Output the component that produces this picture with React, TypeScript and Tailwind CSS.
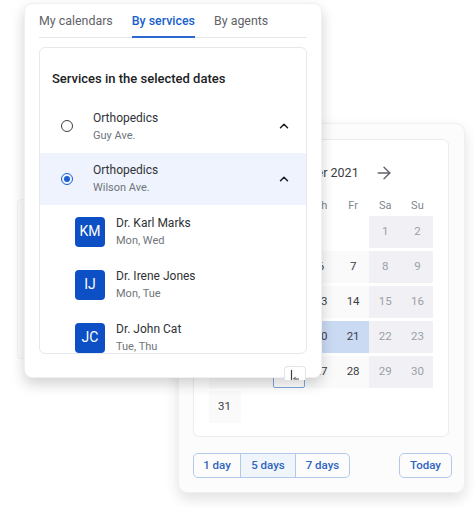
import { ArrowLeft, ArrowRight, ChevronUp } from "lucide-react";

const font = { fontFamily: "Roboto, 'Liberation Sans', sans-serif" };

const agents = [
  { initials: "KM", name: "Dr. Karl Marks", days: "Mon, Wed" },
  { initials: "IJ", name: "Dr. Irene Jones", days: "Mon, Tue" },
  { initials: "JC", name: "Dr. John Cat", days: "Tue, Thu" },
];

const weekDays = ["Mo", "Tu", "We", "Th", "Fr", "Sa", "Su"];

// month starts on a Saturday, 31 days
const cells: (number | null)[] = [
  null, null, null, null, null,
  ...Array.from({ length: 31 }, (_, i) => i + 1),
];

export default function App() {
  return (
    <div
      className="relative w-[474px] h-[507px] bg-white overflow-hidden"
      style={font}
    >
      {/* faint window far behind */}
      <div className="absolute left-[17px] top-[199px] w-[120px] h-[160px] bg-[#fcfcfc] border border-[#f4f4f4] rounded-[4px]" />

      <CalendarCard />
      <ServicesPopup />

      {/* little handle sitting on the popup's lower edge */}
      <div className="absolute left-[284px] top-[366px] w-[22px] h-[14px] bg-white border border-b-0 border-[#e2e4e8] rounded-t-[4px]">
        <svg width="22" height="14" viewBox="0 0 22 14" className="absolute -left-px -top-px">
          <path d="M7.5 4v10" stroke="#3c4043" strokeWidth="1.2" />
          <path d="M15 13h-5.5l2.2-2.2" stroke="#3c4043" strokeWidth="1" fill="none" />
        </svg>
      </div>
    </div>
  );
}

function ServicesPopup() {
  return (
    <div className="absolute left-[24px] top-[3px] w-[298px] h-[375px] bg-white rounded-[8px] border border-[#f0f0f2] shadow-[0_6px_14px_rgba(0,0,0,0.18)] px-[14px] flex flex-col">
      <div className="flex gap-[19px] border-b border-[#e4e6eb] h-[34px] text-[12.4px]">
        <div className="pt-[8px] text-[#5f6368]">My calendars</div>
        <div className="pt-[8px] text-[#1b5fcc] font-medium border-b-2 border-[#2d68d2] -mb-px">
          By services
        </div>
        <div className="pt-[8px] text-[#5f6368]">By agents</div>
      </div>

      <div className="mt-[9px] h-[307px] border border-[#e6e8ec] rounded-[6px] overflow-hidden">
        <div className="pl-[12px] pt-[21px] h-[52px] text-[13px] font-medium text-[#202124]">
          Services in the selected dates
        </div>

        <ServiceRow title="Orthopedics" place="Guy Ave." />
        <ServiceRow title="Orthopedics" place="Wilson Ave." selected />

        {agents.map((a) => (
          <div key={a.initials} className="flex items-center h-[53px] pl-[35px] gap-[11px]">
            <div className="w-[30px] h-[30px] rounded-[4px] bg-[#0d4fc4] text-white text-[14px] flex items-center justify-center">
              {a.initials}
            </div>
            <div className="flex flex-col">
              <span className="text-[12px] text-[#303236] leading-[16px]">{a.name}</span>
              <span className="text-[11px] text-[#70757a] leading-[15px] mt-[2px]">{a.days}</span>
            </div>
          </div>
        ))}
      </div>
    </div>
  );
}

function ServiceRow({
  title,
  place,
  selected,
}: {
  title: string;
  place: string;
  selected?: boolean;
}) {
  return (
    <div
      className={
        "flex items-center h-[52.5px] pl-[21px] pr-[15px] " +
        (selected ? "bg-[#eef3fd]" : "bg-white")
      }
    >
      {selected ? (
        <div className="w-[12px] h-[12px] rounded-full border-[1.5px] border-[#1a5fd0] flex items-center justify-center">
          <div className="w-[6px] h-[6px] rounded-full bg-[#1a5fd0]" />
        </div>
      ) : (
        <div className="w-[12px] h-[12px] rounded-full border-[1.5px] border-[#3c4043]" />
      )}
      <div className="flex flex-col ml-[20px] flex-1">
        <span className="text-[12px] text-[#303236] leading-[16px]">{title}</span>
        <span className="text-[11px] text-[#70757a] leading-[15px] mt-[2px]">{place}</span>
      </div>
      <ChevronUp size={14} strokeWidth={2.6} className="text-[#202124]" />
    </div>
  );
}

function CalendarCard() {
  return (
    <div className="absolute left-[178px] top-[123px] w-[287px] h-[370px] bg-[#fcfcfd] rounded-[9px] border border-[#f0f0f3] shadow-[0_6px_14px_rgba(0,0,0,0.12)] pl-[14px] pt-[15px]">
      <div className="w-[256px] h-[298px] bg-white border border-[#ebecef] rounded-[6px] pt-[22px]">
        <div className="flex items-center justify-center h-[22px] gap-[15px] text-[#5f6368]">
          <ArrowLeft size={20} strokeWidth={1.6} />
          <span className="text-[12.5px] text-[#3c4043]">October 2021</span>
          <ArrowRight size={20} strokeWidth={1.6} />
        </div>

        <div className="grid grid-cols-7 w-[225px] mx-auto mt-[12px] h-[20px] items-center text-center text-[11px] text-[#80868b]">
          {weekDays.map((d) => (
            <span key={d}>{d}</span>
          ))}
        </div>

        <div className="grid grid-cols-7 w-[225px] mx-auto gap-y-[3px]">
          {cells.map((day, i) => {
            const col = i % 7;
            if (day === null) return <div key={i} className="h-[32px]" />;
            const weekend = col >= 5;
            const inRange = day >= 17 && day <= 21;
            const today = day === 26;
            let cls = "h-[32px] flex items-center justify-center text-[11.5px] ";
            if (inRange) cls += "bg-[#c9daf2] text-[#3c4043]";
            else if (weekend) cls += "bg-[#f1f1f5] text-[#9aa0a6]";
            else cls += "bg-[#fafafb] text-[#3c4043]";
            if (today) cls += " border-[1.5px] border-[#7fa4dd] rounded-[2px] bg-white";
            return (
              <div key={i} className={cls}>
                {day}
              </div>
            );
          })}
        </div>
      </div>

      <div className="flex items-center justify-between mt-[16px] w-[259px] text-[11.5px] font-medium text-[#2f64c0]">
        <div className="flex h-[25px] border border-[#b3c9ec] rounded-[5px] overflow-hidden">
          <button className="w-[47px] border-r border-[#b3c9ec]">1 day</button>
          <button className="w-[55px] border-r border-[#b3c9ec] bg-[#f0f4fb]">5 days</button>
          <button className="w-[53px]">7 days</button>
        </div>
        <button className="w-[53px] h-[25px] border border-[#b3c9ec] rounded-[5px]">Today</button>
      </div>
    </div>
  );
}
